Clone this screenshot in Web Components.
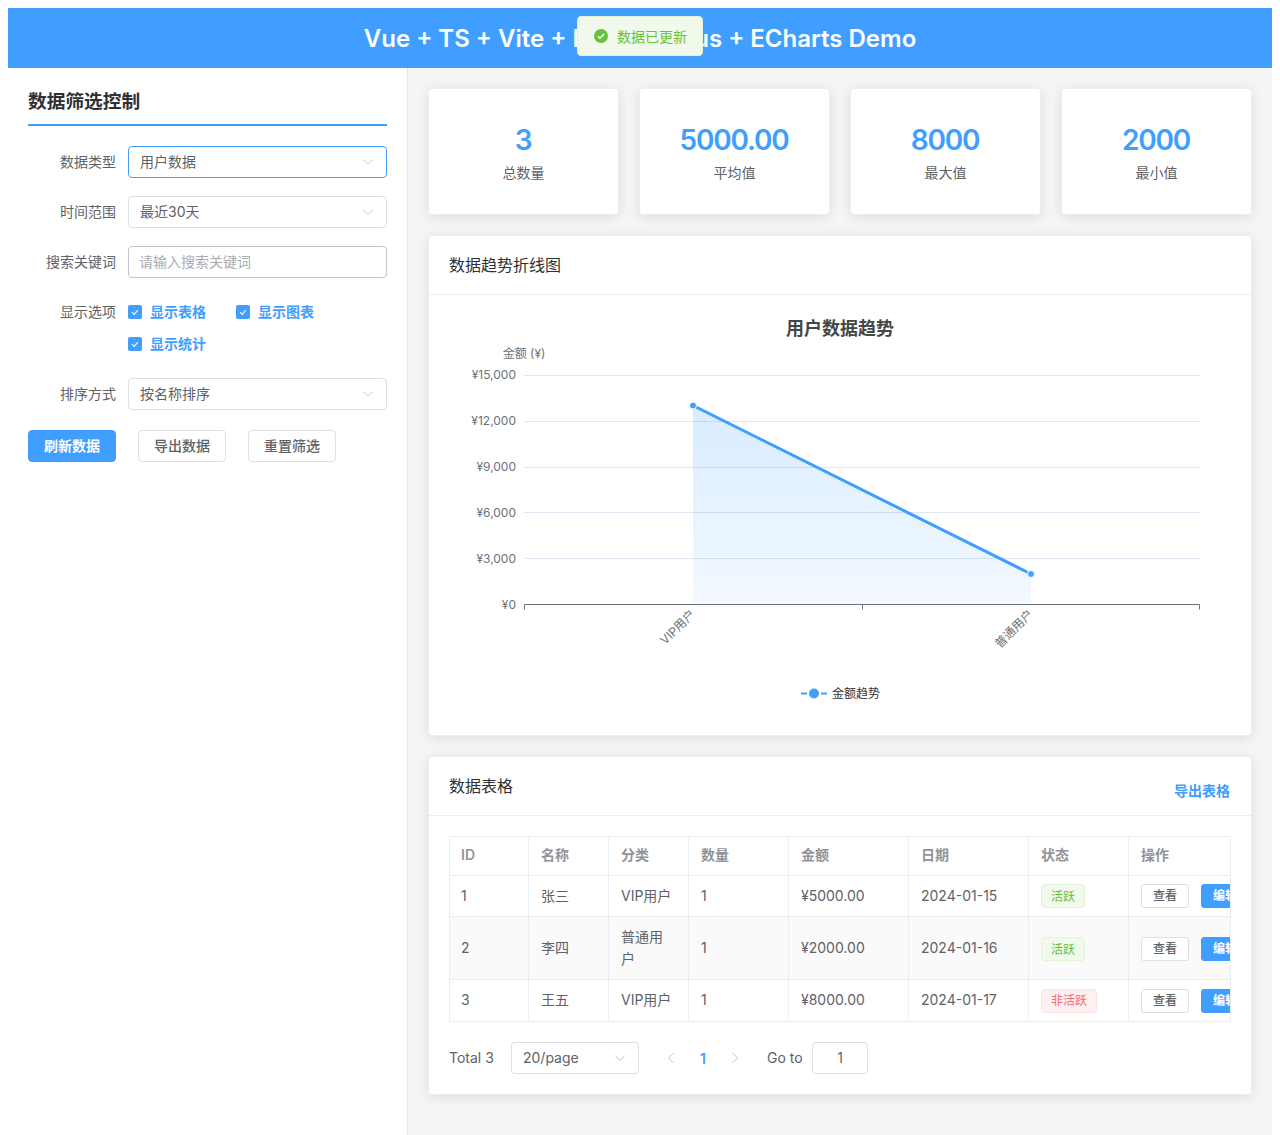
<!DOCTYPE html>
<html lang="zh-CN">
<head>
<meta charset="utf-8">
<title>Vue + TS + Vite + Element Plus + ECharts Demo</title>
<style>
  html, body { background: #fff; }
  body {
    margin: 8px 8px 0;
    font-family: Inter, "Noto Sans CJK SC", sans-serif;
    font-size: 14px;
    color: #606266;
  }
</style>
</head>
<body>
<demo-app></demo-app>
<script>
// chevrons are shared by select-box and pager-bar
const chevronDown = `<svg width="12" height="8" viewBox="0 0 12 8"><path d="M1 1.5 6 6.5 11 1.5" fill="none" stroke="#c0c4cc" stroke-width="1"/></svg>`;

class UiButton extends HTMLElement {
  constructor() {
    super();
    this.attachShadow({ mode: 'open' });
  }

  getStyles() {
    return `
      <style>
        :host {
          display: inline-flex;
          box-sizing: border-box;
          align-items: center;
          justify-content: center;
          width: 88px;
          height: 32px;
          padding-bottom: 2px;
          border: 1px solid #dcdfe6;
          border-radius: 4px;
          background: #fff;
          color: #606266;
          font-size: 14px;
          font-weight: 500;
          white-space: nowrap;
          flex: none;
        }
        :host([primary]) {
          background: #409eff;
          border-color: #409eff;
          color: #fff;
          font-weight: 600;
        }
        :host([small]) {
          width: 48px;
          height: 24px;
          padding-bottom: 0;
          font-size: 12px;
          border-radius: 3px;
        }
      </style>
    `;
  }

  connectedCallback() {
    this.shadowRoot.innerHTML = `${this.getStyles()}<slot></slot>`;
  }
}
customElements.define('ui-button', UiButton);

class SelectBox extends HTMLElement {
  constructor() {
    super();
    this.attachShadow({ mode: 'open' });
  }

  getStyles() {
    return `
      <style>
        :host {
          display: flex;
          box-sizing: border-box;
          align-items: center;
          justify-content: space-between;
          width: 259px;
          height: 32px;
          padding: 0 12px 0 11px;
          border: 1px solid #dcdfe6;
          border-radius: 4px;
          background: #fff;
          color: #606266;
          font-size: 14px;
        }
        :host([focused]) { border-color: #409eff; }
        span { margin-bottom: 2px; }
        svg { display: block; }
      </style>
    `;
  }

  connectedCallback() {
    this.shadowRoot.innerHTML = `${this.getStyles()}<span><slot></slot></span>${chevronDown}`;
  }
}
customElements.define('select-box', SelectBox);

class CheckBox extends HTMLElement {
  constructor() {
    super();
    this.attachShadow({ mode: 'open' });
  }

  getStyles() {
    return `
      <style>
        :host {
          display: inline-flex;
          align-items: center;
          height: 32px;
          color: #409eff;
          font-size: 14px;
          font-weight: 600;
        }
        .box {
          box-sizing: border-box;
          display: flex;
          align-items: center;
          justify-content: center;
          width: 14px;
          height: 14px;
          margin-right: 8px;
          border-radius: 2px;
          background: #409eff;
        }
        .text { margin-bottom: 2px; }
      </style>
    `;
  }

  connectedCallback() {
    this.shadowRoot.innerHTML = `
      ${this.getStyles()}
      <span class="box"><svg width="10" height="10" viewBox="0 0 10 10"><path d="M2 5.2 4.2 7.4 8 3" fill="none" stroke="#fff" stroke-width="1.1"/></svg></span>
      <span class="text"><slot></slot></span>
    `;
  }
}
customElements.define('check-box', CheckBox);

class FormRow extends HTMLElement {
  constructor() {
    super();
    this.attachShadow({ mode: 'open' });
  }

  getStyles() {
    return `
      <style>
        :host {
          display: flex;
          margin-bottom: 18px;
        }
        label {
          box-sizing: border-box;
          flex: none;
          width: 100px;
          padding-right: 12px;
          height: 32px;
          line-height: 32px;
          text-align: right;
          color: #606266;
          font-size: 14px;
        }
        .control { flex: 1; min-width: 0; }
      </style>
    `;
  }

  connectedCallback() {
    this.shadowRoot.innerHTML = `
      ${this.getStyles()}
      <label>${this.getAttribute('label')}</label>
      <div class="control"><slot></slot></div>
    `;
  }
}
customElements.define('form-row', FormRow);

class FilterSidebar extends HTMLElement {
  constructor() {
    super();
    this.attachShadow({ mode: 'open' });
  }

  getStyles() {
    return `
      <style>
        :host {
          display: block;
          box-sizing: border-box;
          flex: none;
          width: 400px;
          padding: 20px;
          background: #fff;
          border-right: 1px solid #e6e6e6;
        }
        h3 {
          box-sizing: content-box;
          margin: 0 0 20px;
          height: 36px;
          line-height: 27px;
          border-bottom: 2px solid #409eff;
          color: #303133;
          font-size: 18.72px;
          font-weight: 700;
        }
        input {
          display: block;
          box-sizing: border-box;
          width: 259px;
          height: 32px;
          padding: 0 11px 2px 10px;
          border: 1px solid #c0c4cc;
          border-radius: 4px;
          outline: none;
          font: inherit;
          color: #606266;
        }
        input::placeholder { color: #a8abb2; opacity: 1; }
        .checks { display: flex; flex-wrap: wrap; column-gap: 30px; }
        .actions { display: flex; gap: 22px; margin-top: 20px; }
      </style>
    `;
  }

  connectedCallback() {
    this.shadowRoot.innerHTML = `
      ${this.getStyles()}
      <h3>数据筛选控制</h3>
      <form-row label="数据类型"><select-box focused>用户数据</select-box></form-row>
      <form-row label="时间范围"><select-box>最近30天</select-box></form-row>
      <form-row label="搜索关键词"><input placeholder="请输入搜索关键词"></form-row>
      <form-row label="显示选项">
        <div class="checks">
          <check-box>显示表格</check-box>
          <check-box>显示图表</check-box>
          <check-box>显示统计</check-box>
        </div>
      </form-row>
      <form-row label="排序方式"><select-box>按名称排序</select-box></form-row>
      <div class="actions">
        <ui-button primary>刷新数据</ui-button>
        <ui-button>导出数据</ui-button>
        <ui-button>重置筛选</ui-button>
      </div>
    `;
  }
}
customElements.define('filter-sidebar', FilterSidebar);

class StatCard extends HTMLElement {
  constructor() {
    super();
    this.attachShadow({ mode: 'open' });
  }

  getStyles() {
    return `
      <style>
        :host {
          display: block;
          box-sizing: border-box;
          height: 127px;
          padding: 30px 20px;
          border: 1px solid #ebeef5;
          border-radius: 4px;
          background: #fff;
          box-shadow: 0 2px 12px rgba(0, 0, 0, .1);
          text-align: center;
        }
        .num {
          height: 42px;
          line-height: 42px;
          margin: 0 0 1px -1px;
          color: #409eff;
          font-size: 28px;
          font-weight: 600;
          letter-spacing: -1.2px;
        }
        .label {
          line-height: 21px;
          color: #606266;
          font-size: 14px;
        }
      </style>
    `;
  }

  connectedCallback() {
    this.shadowRoot.innerHTML = `
      ${this.getStyles()}
      <div class="num">${this.getAttribute('value')}</div>
      <div class="label">${this.getAttribute('label')}</div>
    `;
  }
}
customElements.define('stat-card', StatCard);

class PanelCard extends HTMLElement {
  constructor() {
    super();
    this.attachShadow({ mode: 'open' });
  }

  getStyles() {
    return `
      <style>
        :host {
          display: block;
          border: 1px solid #ebeef5;
          border-radius: 4px;
          background: #fff;
          box-shadow: 0 2px 12px rgba(0, 0, 0, .1);
        }
        header {
          box-sizing: border-box;
          display: flex;
          justify-content: space-between;
          height: 59px;
          padding: 18px 21px 18px 20px;
          border-bottom: 1px solid #ebeef5;
          color: #303133;
          font-size: 16px;
          line-height: 22px;
        }
        ::slotted([slot="extra"]) {
          margin-top: 5px;
          color: #409eff;
          font-size: 14px;
          font-weight: 600;
        }
        .body { padding: 20px; }
      </style>
    `;
  }

  connectedCallback() {
    this.shadowRoot.innerHTML = `
      ${this.getStyles()}
      <header><span>${this.getAttribute('heading')}</span><slot name="extra"></slot></header>
      <div class="body"><slot></slot></div>
    `;
  }
}
customElements.define('panel-card', PanelCard);

class TrendChart extends HTMLElement {
  constructor() {
    super();
    this.attachShadow({ mode: 'open' });
  }

  getStyles() {
    return `
      <style>
        :host { display: block; height: 400px; }
        svg { display: block; }
        text { font-family: Inter, "Noto Sans CJK SC", sans-serif; }
      </style>
    `;
  }

  render() {
    // viewBox keeps the page coordinates of the reference, easier to compare
    const ticks = [['¥15,000', 375, 379], ['¥12,000', 421, 425], ['¥9,000', 467, 471], ['¥6,000', 512, 517], ['¥3,000', 558, 563]];
    const grid = ticks.map(([t, y, base]) => `
      <line x1="524" x2="1200" y1="${y + .5}" y2="${y + .5}" stroke="#e0e6f1"/>
      <text x="516" y="${base}" text-anchor="end" font-size="12" fill="#6e7079">${t}</text>`).join('');

    return `
      <svg width="782" height="400" viewBox="449 315 782 400">
        <defs>
          <linearGradient id="area" x1="0" y1="0" x2="0" y2="1">
            <stop offset="0" stop-color="#409eff" stop-opacity=".2"/>
            <stop offset="1" stop-color="#409eff" stop-opacity=".06"/>
          </linearGradient>
        </defs>
        <text x="840" y="335" text-anchor="middle" font-size="18" font-weight="700" fill="#464646">用户数据趋势</text>
        <text x="524" y="357.5" text-anchor="middle" font-size="12" fill="#6e7079">金额 (¥)</text>
        ${grid}
        <text x="516" y="609" text-anchor="end" font-size="12" fill="#6e7079">¥0</text>
        <path d="M693 405.5 1031 574V604.5H693Z" fill="url(#area)"/>
        <path d="M524.5 609.5V604.5H1199.5V609.5M862.5 604.5V609.5" fill="none" stroke="#6e7079"/>
        <path d="M693 405.5 1031 574" fill="none" stroke="#409eff" stroke-width="3"/>
        <circle cx="693" cy="405.5" r="3.5" fill="#409eff" stroke="#fff"/>
        <circle cx="1031" cy="574" r="3.5" fill="#409eff" stroke="#fff"/>
        <text transform="translate(693 612) rotate(-45)" x="0" y="4" text-anchor="end" font-size="12" fill="#6e7079">VIP用户</text>
        <text transform="translate(1031 612) rotate(-45)" x="0" y="4" text-anchor="end" font-size="12" fill="#6e7079">普通用户</text>
        <path d="M801 693.5H807M821 693.5H827" stroke="#409eff" stroke-width="2"/>
        <circle cx="814" cy="693.5" r="5" fill="#409eff"/>
        <text x="832" y="698" font-size="12" fill="#333">金额趋势</text>
      </svg>
    `;
  }

  connectedCallback() {
    this.shadowRoot.innerHTML = this.getStyles() + this.render();
  }
}
customElements.define('trend-chart', TrendChart);

class StatusTag extends HTMLElement {
  constructor() {
    super();
    this.attachShadow({ mode: 'open' });
  }

  connectedCallback() {
    this.shadowRoot.innerHTML = `
      <style>
        :host {
          display: inline-flex;
          box-sizing: border-box;
          align-items: center;
          height: 24px;
          padding: 1px 9px 0;
          border: 1px solid #e1f3d8;
          border-radius: 4px;
          background: #f0f9eb;
          color: #67c23a;
          font-size: 12px;
          vertical-align: middle;
        }
        :host([danger]) {
          border-color: #fde2e2;
          background: #fef0f0;
          color: #f56c6c;
        }
      </style>
      <slot></slot>
    `;
  }
}
customElements.define('status-tag', StatusTag);

class DataTable extends HTMLElement {
  constructor() {
    super();
    this.attachShadow({ mode: 'open' });
  }

  getStyles() {
    return `
      <style>
        :host {
          display: block;
          box-sizing: border-box;
          overflow: hidden;
          width: 782px;
          border-top: 1px solid #ebeef5;
          border-right: 1px solid #ebeef5;
        }
        table {
          table-layout: fixed;
          width: 800px;
          border-collapse: separate;
          border-spacing: 0;
          font-size: 14px;
          color: #606266;
        }
        th, td {
          box-sizing: border-box;
          padding: 0 12px;
          border-right: 1px solid #ebeef5;
          border-bottom: 1px solid #ebeef5;
          text-align: left;
          line-height: 22px;
        }
        th:first-child, td:first-child {
          padding-left: 11px;
          border-left: 1px solid #ebeef5;
        }
        th {
          height: 39px;
          padding-bottom: 2px;
          color: #909399;
          font-weight: 600;
        }
        tr.alt td { background: #fafafa; }
        tr.alt td.widget { padding-top: 2px; }
        tr.last td:not(.widget) { padding-bottom: 2px; }
        .ops { display: flex; gap: 12px; white-space: nowrap; }
      </style>
    `;
  }

  render() {
    const rows = [
      [1, '张三', 'VIP用户', '¥5000.00', '2024-01-15', '活跃', 41, ''],
      [2, '李四', '普通用户', '¥2000.00', '2024-01-16', '活跃', 63, 'alt'],
      [3, '王五', 'VIP用户', '¥8000.00', '2024-01-17', '非活跃', 42, 'last'],
    ];
    const body = rows.map(r => `
      <tr class="${r[7]}" style="height:${r[6]}px">
        <td>${r[0]}</td><td>${r[1]}</td><td>${r[2]}</td><td>1</td>
        <td>${r[3]}</td><td>${r[4]}</td>
        <td class="widget"><status-tag ${r[5] === '非活跃' ? 'danger' : ''}>${r[5]}</status-tag></td>
        <td class="widget"><div class="ops"><ui-button small>查看</ui-button><ui-button small primary>编辑</ui-button></div></td>
      </tr>`).join('');

    return `
      <table>
        <colgroup>
          <col style="width:80px"><col style="width:80px"><col style="width:80px"><col style="width:100px">
          <col style="width:120px"><col style="width:120px"><col style="width:100px"><col style="width:120px">
        </colgroup>
        <thead><tr>
          <th>ID</th><th>名称</th><th>分类</th><th>数量</th><th>金额</th><th>日期</th><th>状态</th><th>操作</th>
        </tr></thead>
        <tbody>${body}</tbody>
      </table>
    `;
  }

  connectedCallback() {
    this.shadowRoot.innerHTML = this.getStyles() + this.render();
  }
}
customElements.define('data-table', DataTable);

class PagerBar extends HTMLElement {
  constructor() {
    super();
    this.attachShadow({ mode: 'open' });
  }

  getStyles() {
    return `
      <style>
        :host {
          display: flex;
          align-items: center;
          height: 32px;
          margin-top: 20px;
          color: #606266;
          font-size: 14px;
        }
        .total { width: 62px; margin-bottom: 2px; }
        select-box { width: 128px; margin-right: 16px; }
        .nav {
          display: flex;
          align-items: center;
          justify-content: center;
          width: 32px;
          height: 32px;
        }
        .page { color: #409eff; font-weight: 600; }
        .jump { width: 45px; margin: 0 0 2px 16px; }
        .input {
          box-sizing: border-box;
          width: 56px;
          height: 32px;
          line-height: 30px;
          border: 1px solid #dcdfe6;
          border-radius: 4px;
          text-align: center;
        }
      </style>
    `;
  }

  connectedCallback() {
    this.shadowRoot.innerHTML = `
      ${this.getStyles()}
      <span class="total">Total 3</span>
      <select-box>20/page</select-box>
      <span class="nav"><svg width="8" height="12" viewBox="0 0 8 12"><path d="M6.5 1 1.5 6 6.5 11" fill="none" stroke="#c0c4cc"/></svg></span>
      <span class="nav page">1</span>
      <span class="nav"><svg width="8" height="12" viewBox="0 0 8 12"><path d="M1.5 1 6.5 6 1.5 11" fill="none" stroke="#c0c4cc"/></svg></span>
      <span class="jump">Go to</span>
      <span class="input">1</span>
    `;
  }
}
customElements.define('pager-bar', PagerBar);

class ToastMessage extends HTMLElement {
  constructor() {
    super();
    this.attachShadow({ mode: 'open' });
  }

  connectedCallback() {
    this.shadowRoot.innerHTML = `
      <style>
        :host {
          position: fixed;
          top: 16px;
          left: 50%;
          transform: translateX(-50%);
          display: flex;
          box-sizing: border-box;
          align-items: center;
          gap: 8px;
          width: 126px;
          height: 40px;
          padding: 0 14px 0 15px;
          border: 1px solid #e1f3d8;
          border-radius: 4px;
          background: #f0f9eb;
          color: #67c23a;
          font-size: 14px;
          white-space: nowrap;
        }
        svg { display: block; flex: none; }
        span { margin-bottom: 1px; }
      </style>
      <svg width="16" height="16" viewBox="0 0 16 16"><circle cx="8" cy="8" r="7" fill="#67c23a"/><path d="M4.9 8.2 7 10.2 11.1 6" fill="none" stroke="#fff" stroke-width="1.4"/></svg>
      <span><slot></slot></span>
    `;
  }
}
customElements.define('toast-message', ToastMessage);

class DemoApp extends HTMLElement {
  constructor() {
    super();
    this.attachShadow({ mode: 'open' });
  }

  getStyles() {
    return `
      <style>
        :host {
          display: flex;
          flex-direction: column;
          min-height: calc(100vh - 8px);
        }
        .top {
          flex: none;
          height: 60px;
          line-height: 62px;
          background: #409eff;
          color: #fff;
          font-size: 24px;
          font-weight: 600;
          text-align: center;
        }
        .columns { flex: 1; display: flex; }
        main {
          flex: 1;
          min-width: 0;
          display: flex;
          flex-direction: column;
          gap: 20px;
          padding: 20px;
          background: #f5f5f5;
        }
        .stats {
          display: grid;
          grid-template-columns: repeat(4, 1fr);
          gap: 20px;
        }
      </style>
    `;
  }

  connectedCallback() {
    this.shadowRoot.innerHTML = `
      ${this.getStyles()}
      <div class="top">Vue + TS + Vite + Element Plus + ECharts Demo</div>
      <toast-message>数据已更新</toast-message>
      <div class="columns">
        <filter-sidebar></filter-sidebar>
        <main>
          <div class="stats">
            <stat-card value="3" label="总数量"></stat-card>
            <stat-card value="5000.00" label="平均值"></stat-card>
            <stat-card value="8000" label="最大值"></stat-card>
            <stat-card value="2000" label="最小值"></stat-card>
          </div>
          <panel-card heading="数据趋势折线图"><trend-chart></trend-chart></panel-card>
          <panel-card heading="数据表格">
            <span slot="extra">导出表格</span>
            <data-table></data-table>
            <pager-bar></pager-bar>
          </panel-card>
        </main>
      </div>
    `;
  }
}
customElements.define('demo-app', DemoApp);
</script>
</body>
</html>
